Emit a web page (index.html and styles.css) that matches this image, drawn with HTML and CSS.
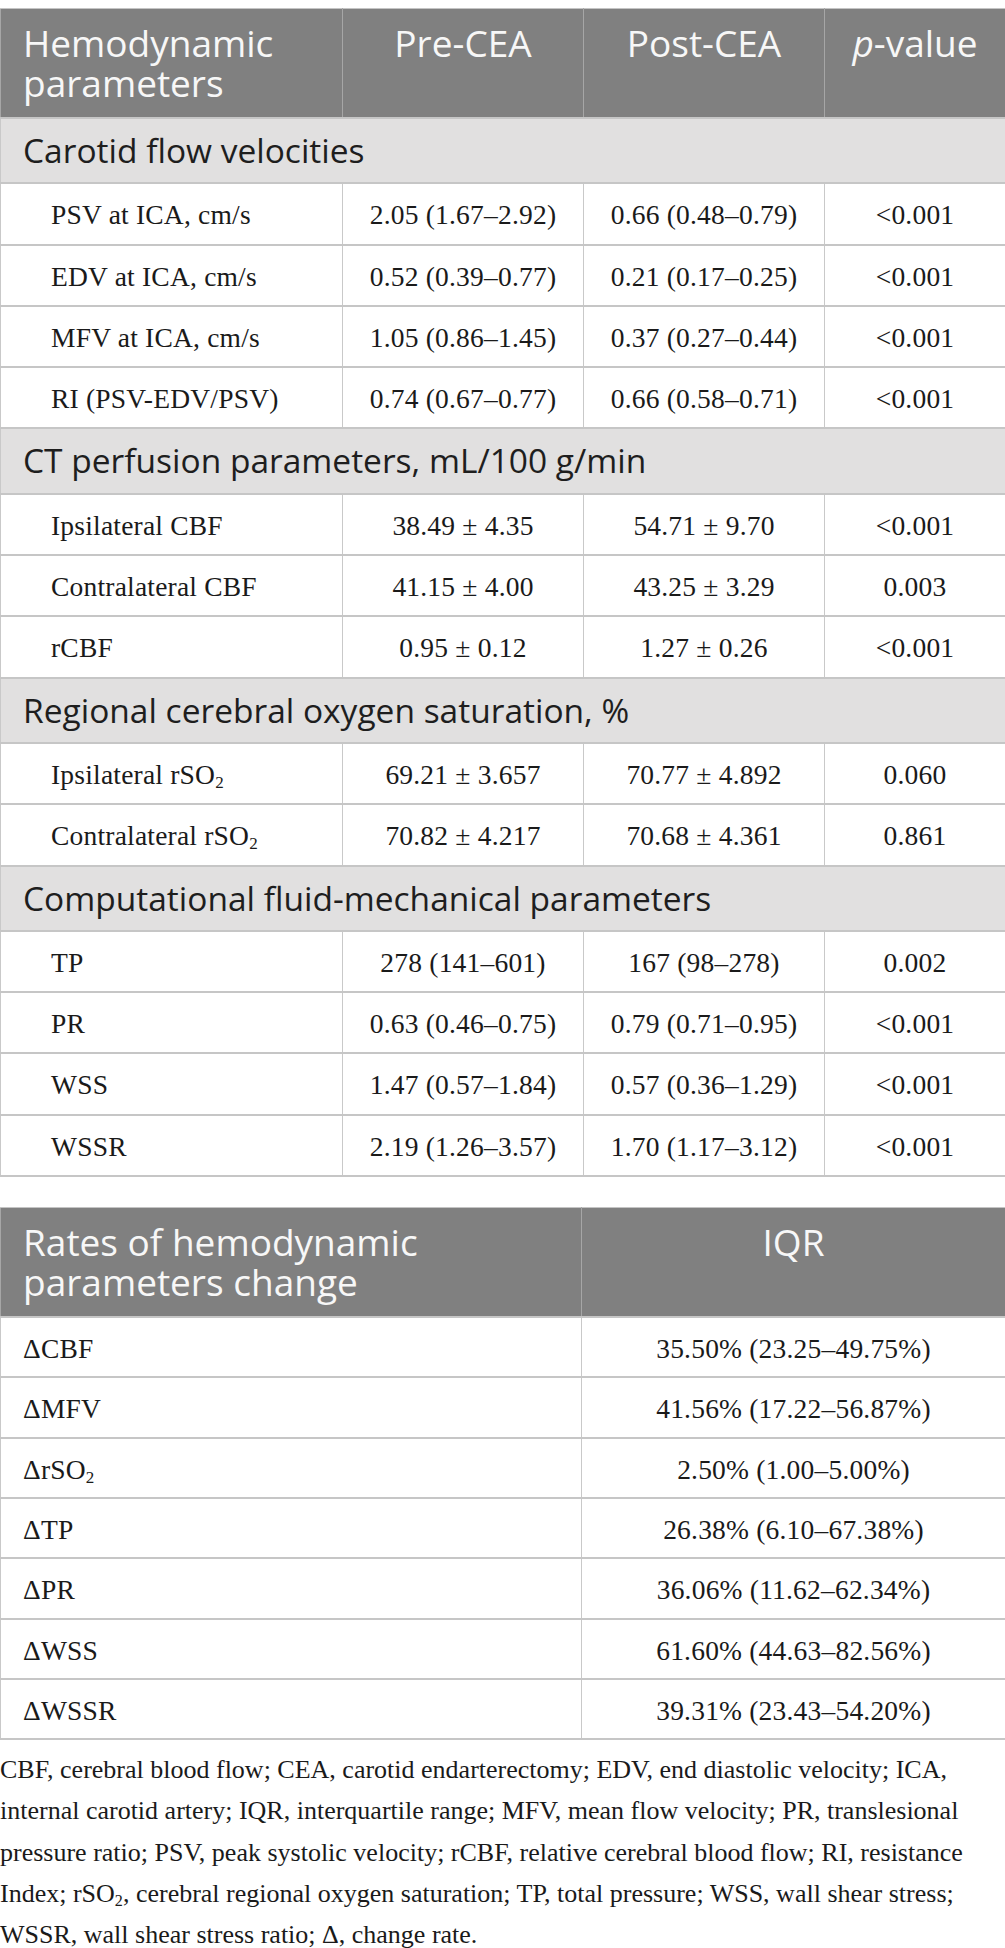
FILE: index.html
```html
<!DOCTYPE html>
<html lang="en">
<head>
<meta charset="utf-8">
<title>Hemodynamic parameters</title>
<link rel="stylesheet" href="styles.css">
</head>
<body>
<table class="tbl tbl-main">
  <colgroup>
    <col class="w-name"><col class="w-val"><col class="w-val"><col class="w-p">
  </colgroup>
  <thead>
    <tr>
      <th class="th-left">Hemodynamic parameters</th>
      <th>Pre-CEA</th>
      <th>Post-CEA</th>
      <th><i>p</i>-value</th>
    </tr>
  </thead>
  <tbody>
    <tr class="sec"><td colspan="4">Carotid flow velocities</td></tr>
    <tr><td class="name">PSV at ICA, cm/s</td><td>2.05 (1.67–2.92)</td><td>0.66 (0.48–0.79)</td><td>&lt;0.001</td></tr>
    <tr><td class="name">EDV at ICA, cm/s</td><td>0.52 (0.39–0.77)</td><td>0.21 (0.17–0.25)</td><td>&lt;0.001</td></tr>
    <tr><td class="name">MFV at ICA, cm/s</td><td>1.05 (0.86–1.45)</td><td>0.37 (0.27–0.44)</td><td>&lt;0.001</td></tr>
    <tr><td class="name">RI (PSV-EDV/PSV)</td><td>0.74 (0.67–0.77)</td><td>0.66 (0.58–0.71)</td><td>&lt;0.001</td></tr>
    <tr class="sec"><td colspan="4">CT perfusion parameters, mL/100 g/min</td></tr>
    <tr><td class="name">Ipsilateral CBF</td><td>38.49 ± 4.35</td><td>54.71 ± 9.70</td><td>&lt;0.001</td></tr>
    <tr><td class="name">Contralateral CBF</td><td>41.15 ± 4.00</td><td>43.25 ± 3.29</td><td>0.003</td></tr>
    <tr><td class="name">rCBF</td><td>0.95 ± 0.12</td><td>1.27 ± 0.26</td><td>&lt;0.001</td></tr>
    <tr class="sec"><td colspan="4">Regional cerebral oxygen saturation, %</td></tr>
    <tr><td class="name">Ipsilateral rSO<sub>2</sub></td><td>69.21 ± 3.657</td><td>70.77 ± 4.892</td><td>0.060</td></tr>
    <tr><td class="name">Contralateral rSO<sub>2</sub></td><td>70.82 ± 4.217</td><td>70.68 ± 4.361</td><td>0.861</td></tr>
    <tr class="sec"><td colspan="4">Computational fluid-mechanical parameters</td></tr>
    <tr><td class="name">TP</td><td>278 (141–601)</td><td>167 (98–278)</td><td>0.002</td></tr>
    <tr><td class="name">PR</td><td>0.63 (0.46–0.75)</td><td>0.79 (0.71–0.95)</td><td>&lt;0.001</td></tr>
    <tr><td class="name">WSS</td><td>1.47 (0.57–1.84)</td><td>0.57 (0.36–1.29)</td><td>&lt;0.001</td></tr>
    <tr><td class="name">WSSR</td><td>2.19 (1.26–3.57)</td><td>1.70 (1.17–3.12)</td><td>&lt;0.001</td></tr>
  </tbody>
</table>

<table class="tbl tbl-rates">
  <colgroup>
    <col class="w-rname"><col class="w-iqr">
  </colgroup>
  <thead>
    <tr>
      <th class="th-left">Rates of hemodynamic<br>parameters change</th>
      <th>IQR</th>
    </tr>
  </thead>
  <tbody>
    <tr><td class="name2">ΔCBF</td><td>35.50% (23.25–49.75%)</td></tr>
    <tr><td class="name2">ΔMFV</td><td>41.56% (17.22–56.87%)</td></tr>
    <tr><td class="name2">ΔrSO<sub>2</sub></td><td>2.50% (1.00–5.00%)</td></tr>
    <tr><td class="name2">ΔTP</td><td>26.38% (6.10–67.38%)</td></tr>
    <tr><td class="name2">ΔPR</td><td>36.06% (11.62–62.34%)</td></tr>
    <tr><td class="name2">ΔWSS</td><td>61.60% (44.63–82.56%)</td></tr>
    <tr><td class="name2">ΔWSSR</td><td>39.31% (23.43–54.20%)</td></tr>
  </tbody>
</table>

<p class="foot">CBF, cerebral blood flow; CEA, carotid endarterectomy; EDV, end diastolic velocity; ICA, internal carotid artery; IQR, interquartile range; MFV, mean flow velocity; PR, translesional pressure ratio; PSV, peak systolic velocity; rCBF, relative cerebral blood flow; RI, resistance Index; rSO<sub>2</sub>, cerebral regional oxygen saturation; TP, total pressure; WSS, wall shear stress; WSSR, wall shear stress ratio; Δ, change rate.</p>
</body>
</html>
```

FILE: styles.css
```css
html, body {
  background: #ffffff;
}
body {
  margin: 8px 0 0 0;
  font-family: "Liberation Serif", "Times New Roman", serif;
  color: #1a1a1a;
}
.tbl {
  width: 1005px;
  border-collapse: collapse;
  table-layout: fixed;
}
.tbl-rates {
  margin-top: 30px;
}
.w-name { width: 342px; }
.w-val { width: 241px; }
.w-p { width: 181px; }
.w-rname { width: 581px; }
.w-iqr { width: 424px; }

.tbl th {
  background: #808080;
  color: #f7f7f7;
  font-family: "Open Sans", "Noto Sans", sans-serif;
  font-weight: 400;
  font-size: 37px;
  line-height: 40px;
  text-align: center;
  vertical-align: top;
  padding: 14px 12px;
  border: 1px solid #a6a6a6;
  border-top-color: #c4c4c4;
}
.tbl th.th-left {
  text-align: left;
  padding-left: 22px;
}
.tbl th i {
  font-style: italic;
}
.tbl td {
  font-size: 27.5px;
  line-height: 37px;
  padding: 12px 10px 10.3px;
  text-align: center;
  border-left: 1px solid #c9c9c9;
  border-right: 1px solid #c9c9c9;
  border-top: 2px solid #c6c6c6;
  border-bottom: 2px solid #c6c6c6;
  letter-spacing: 0.2px;
}
.tbl-rates td {
  padding-bottom: 9.3px;
}
.tbl td.name {
  text-align: left;
  padding-left: 50px;
}
.tbl td.name2 {
  text-align: left;
  padding-left: 22px;
}
.tbl tr.sec td {
  background: #e1e0e0;
  color: #1e1e1e;
  font-family: "Open Sans", "Noto Sans", sans-serif;
  font-size: 33.5px;
  line-height: 40px;
  letter-spacing: 0;
  text-align: left;
  padding: 11px 22px 12.3px;
}
sub {
  font-size: 0.62em;
  line-height: 0;
  vertical-align: -0.22em;
}
.foot {
  margin: 9px 0 0 0;
  font-size: 26px;
  line-height: 41.3px;
  color: #1a1a1a;
}
```
